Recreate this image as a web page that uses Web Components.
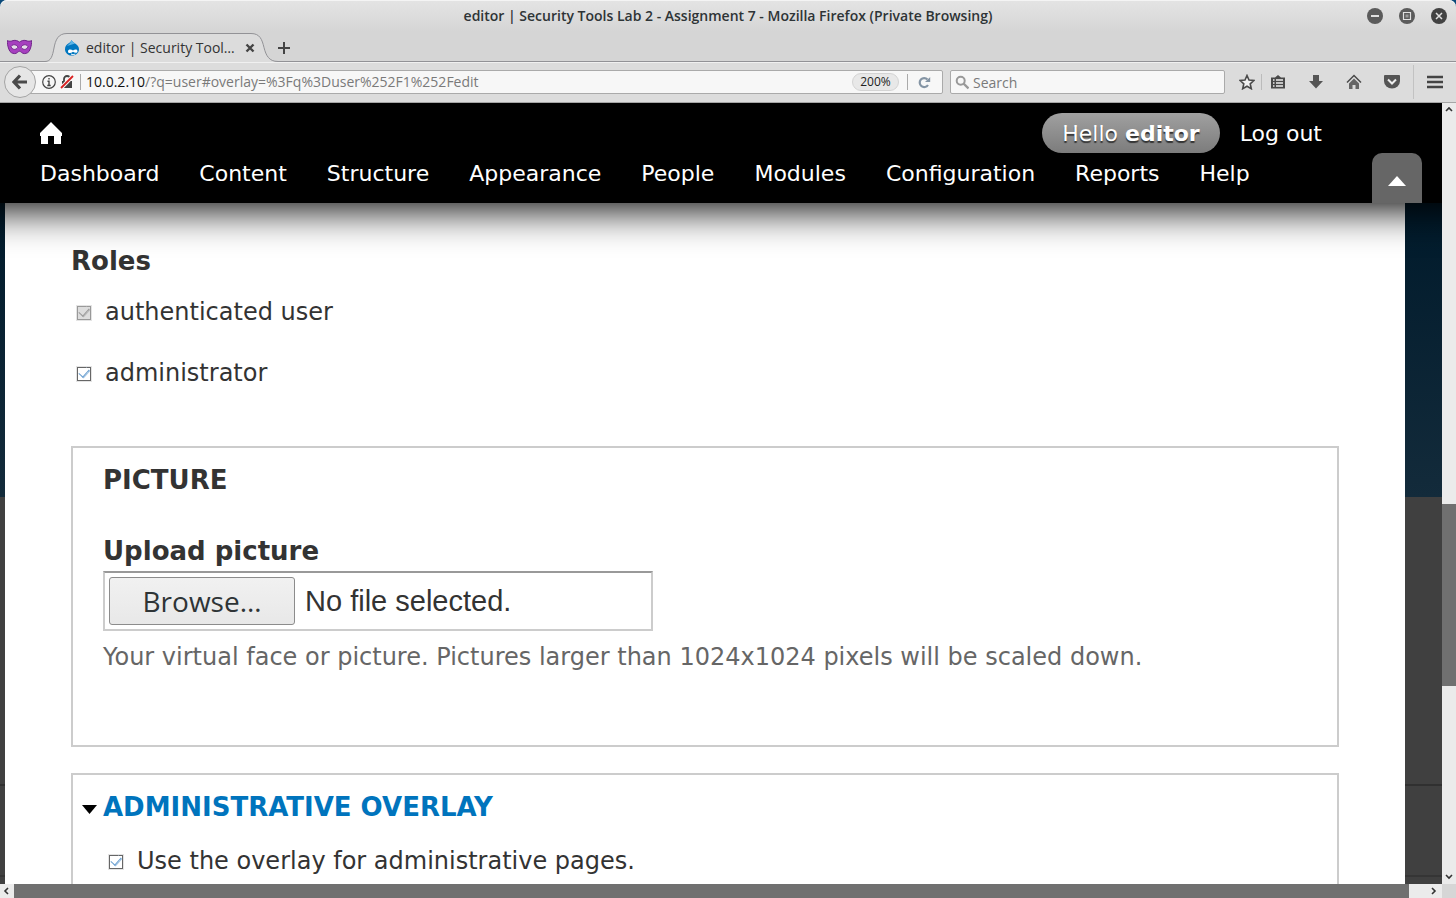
<!DOCTYPE html>
<html lang="en">
<head>
<meta charset="utf-8">
<title>editor | Security Tools Lab 2 - Assignment 7</title>
<style>
  html, body { height: 100%; margin: 0; }
  body { display: flex; flex-direction: column; overflow: hidden; background: #0b4a7a; }
</style>
</head>
<body>
<browser-window heading="editor | Security Tools Lab 2 - Assignment 7 - Mozilla Firefox (Private Browsing)">
  <tab-strip slot="tabs" label="editor | Security Tool…"></tab-strip>
  <nav-bar slot="nav"></nav-bar>
  <scroll-view>
    <admin-toolbar slot="toolbar"></admin-toolbar>
    <page-overlay>
      <role-list></role-list>
      <field-group heading="PICTURE">
        <file-field></file-field>
      </field-group>
      <field-group heading="ADMINISTRATIVE OVERLAY" collapsible>
        <check-item checked>Use the overlay for administrative pages.</check-item>
      </field-group>
    </page-overlay>
  </scroll-view>
</browser-window>

<script>
const define = (name, html, setup) => {
  const template = document.createElement('template');
  template.innerHTML = '<style>:host,*{box-sizing:border-box}button{font:inherit;color:inherit;border:0;padding:0;background:none;cursor:pointer}svg{display:block}</style>' + html;
  customElements.define(name, class extends HTMLElement {
    constructor() {
      super();
      this.attachShadow({ mode: 'open' }).append(template.content.cloneNode(true));
    }
    connectedCallback() { if (setup) setup(this, this.shadowRoot); }
  });
};

define('browser-window', `
<style>
  :host { display: flex; flex-direction: column; flex: 1; min-height: 0; font: 14px/20px "Open Sans", "Noto Sans", sans-serif; color: #2e3436;
    background: linear-gradient(#e4e4e4, #d5d5d5 32px); border-radius: 7px 7px 0 0; overflow: hidden; box-shadow: inset 0 1px #f4f4f4; }
  header { display: grid; grid-template-columns: 96px 1fr 96px; align-items: center; height: 32px; }
  h1 { grid-column: 2; margin: 0; font-size: 14px; line-height: 20px; font-weight: 600; text-align: center; white-space: nowrap; }
  .controls { display: flex; justify-content: flex-end; gap: 16px; padding-right: 9px; }
</style>
<header>
  <h1></h1>
  <div class="controls">
    <button aria-label="Minimize"><svg width="16" height="16"><circle cx="8" cy="8" r="8" fill="#5b5b5b"/><path d="M4 8h8" stroke="#e0e0e0" stroke-width="2"/></svg></button>
    <button aria-label="Maximize"><svg width="16" height="16"><circle cx="8" cy="8" r="8" fill="#5b5b5b"/><path d="M4.500 4.500h7v7h-7z" fill="none" stroke="#e0e0e0" stroke-width="1.200"/><path d="M6.500 6.500h3v3h-3z" fill="#999"/></svg></button>
    <button aria-label="Close"><svg width="16" height="16"><circle cx="8" cy="8" r="8" fill="#424242"/><path d="M5 5l6 6M11 5l-6 6" stroke="#e0e0e0" stroke-width="1.500"/></svg></button>
  </div>
</header>
<slot name="tabs"></slot>
<slot name="nav"></slot>
<slot></slot>`, (host, root) => { root.querySelector('h1').textContent = host.getAttribute('heading'); });

define('tab-strip', `
<style>
  :host { display: flex; align-items: center; height: 30px; border-bottom: 1px solid #929296; }
  .mask { margin: 0 13px 0 7px; }
  .tab { position: relative; display: flex; align-items: center; width: 233px; height: 30px; padding: 2px 23px 0 19px; }
  .shape { position: absolute; left: 0; top: 0; z-index: 0; }
  .tab > :not(.shape) { position: relative; }
  .title { flex: 1; margin-left: 6px; white-space: nowrap; color: #333; }
</style>
<svg class="mask" width="25" height="16" viewBox="0 0 25 16"><path d="M.5 1.500C2 2.600 4 2.400 6 1.600c2.600-.8 5 .4 6.500 1.500C14 2 16.400.8 19 1.600c2 .8 4 1 5.500-.1.300 3-.2 5.500-1.300 8.500-1 3.500-3.500 4.600-6 4.600-2.200 0-3.200-2.300-4.700-2.300s-2.500 2.300-4.700 2.300c-2.500 0-5-1.100-6-4.600C.7 7 .2 4.500.5 1.500z" fill="#a63fbf" stroke="#71278a"/><path d="M4 7.500c2-2.800 5.500-2 7 .7C9 11 5.600 11.500 4 7.500zM21 7.500c-2-2.800-5.500-2-7 .7C16 11 19.400 11.500 21 7.500z" fill="#e6dcea" stroke="#71278a"/></svg>
<div class="tab">
  <svg class="shape" width="233" height="30"><path d="M0 30v-.5C6 29.500 7.500 24 9 16S13 1.500 22 1.500H206c9 0 11 6 13 14s5 14 14 14v.5z" fill="#dcdcdc"/><path d="M0 29.500C6 29.500 7.500 24 9 16S13 1.500 22 1.500H206c9 0 11 6 13 14s5 14 14 14" fill="none" stroke="#929296"/></svg>
  <svg width="16" height="16" viewBox="0 0 16 16"><path d="M7.500 0c.8 1.600 2 2.300 3.700 3.400C13.500 5 15 6.600 15 9.300 15 13 12 15.600 8 15.600S1 12.800 1 9.200c0-2.500 1.400-4.300 3.300-5.600C6 2.500 7 1.500 7.500 0z" fill="#0077c0"/><path d="M7.500 0c.8 1.600 2 2.300 3.700 3.400l-5 1.600L3 6c2-2.500 4-3 4.500-6z" fill="#5cb4e6"/><path d="M4 11.500C4 9 7 9 9 10.500c2-1.500 4.500-1.500 4.500.7 0 2-2.500 2-4.500.6-2 1.600-5 1.800-5-.3z" fill="#fff"/><path d="M7 14c1.500.8 3 .7 4.200 0" stroke="#fff" fill="none"/></svg>
  <span class="title"></span>
  <button aria-label="Close tab"><svg width="10" height="10"><path d="M1.500 1.500l7 7M8.500 1.500l-7 7" stroke="#444" stroke-width="2.400"/></svg></button>
</div>
<button aria-label="New tab"><svg width="12" height="14"><path d="M6 2v12M0 8h12" stroke="#444" stroke-width="2"/></svg></button>`,
(host, root) => { root.querySelector('.title').textContent = host.getAttribute('label'); });

define('nav-bar', `
<style>
  :host { display: flex; align-items: center; height: 41px; padding: 0 13px 0 4px; background: #dcdcdc; border-bottom: 1px solid #a6a6a6; box-shadow: inset 0 1px #f0f0f0; }
  .back { position: relative; display: grid; place-items: center; width: 32px; height: 32px; margin-right: -16px; border: 1px solid #a4a4a4; border-radius: 50%; background: #e6e6e6; }
  .field { display: flex; align-items: center; height: 24px; border: 1px solid #aaa; border-radius: 2px; background: #f7f7f7; color: #7a7a7a; }
  .url { flex: 1; margin-right: 7px; padding: 0 11px 0 21px; }
  .search { width: 275px; padding-left: 4px; }
  .search svg { margin-right: 4px; }
  .bar { width: 1px; height: 16px; background: #aaa; }
  .address { position: relative; flex: 1; height: 22px; margin-left: 5px; }
  .address span { position: absolute; inset: 0; line-height: 22px; pointer-events: none; white-space: nowrap; }
  b { font-weight: 400; color: #111; }
  input { width: 100%; height: 22px; min-width: 0; padding: 0; border: 0; outline: 0; background: none; font: inherit; color: inherit; }
  input::placeholder { color: #7a7a7a; opacity: 1; }
  .zoom { width: 47px; height: 18px; margin-right: 8px; border: 1px solid #d4d4d4; border-radius: 9px; background: #e8e8e8; font-size: 12px; line-height: 16px; color: #222; text-align: center; }
  .tools { display: flex; align-items: center; padding-left: 14px; }
  .tools .long { height: 34px; margin: 0 13px 0 13px; background: #c2c2c2; }
</style>
<button class="back" aria-label="Back"><svg width="16" height="16"><path d="M8 1.500L2 8l6 6.500M2.500 8H15" fill="none" stroke="#4a4a4a" stroke-width="3.200"/></svg></button>
<div class="field url">
  <svg width="14" height="14" viewBox="0 0 14 14"><circle cx="7" cy="7" r="6.300" fill="none" stroke="#444" stroke-width="1.200"/><path d="M7 3v1.600M5.500 6.300H7v4M5.300 10.500h3.400" fill="none" stroke="#444" stroke-width="1.400"/></svg>
  <svg width="14" height="14" viewBox="0 0 14 14" style="margin:0 6px 0 4px"><path d="M2 6h10v7H2z" fill="#444"/><path d="M4 6V4a3 3 0 0 1 6 0v2" fill="none" stroke="#444" stroke-width="1.800"/><path d="M1 13L13 1" stroke="#f7f7f7" stroke-width="4"/><path d="M1 13L13 1" stroke="#d92121" stroke-width="1.800"/></svg>
  <div class="bar"></div>
  <div class="address"><input aria-label="Address"><span><b>10.0.2.10</b>/?q=user#overlay=%3Fq%3Duser%252F1%252Fedit</span></div>
  <button class="zoom">200%</button>
  <div class="bar"></div>
  <button aria-label="Reload" style="margin-left:10px"><svg width="13" height="13"><path d="M10 9a4.500 4.500 0 1 1-.5-5.500" fill="none" stroke="#8494a4" stroke-width="2.200"/><path d="M12.200 1v5H7z" fill="#8494a4"/></svg></button>
</div>
<label class="field search">
  <svg width="15" height="15"><circle cx="5.700" cy="5.700" r="4" fill="none" stroke="#999" stroke-width="2"/><path d="M8.500 8.500l5 5" stroke="#999" stroke-width="2.400"/></svg>
  <input placeholder="Search" aria-label="Search">
</label>
<div class="tools">
  <button aria-label="Bookmark"><svg width="16" height="16"><path d="M8 1.500l2 4.500 4.900.5-3.700 3.300 1.100 4.900L8 12.200l-4.300 2.500 1.100-4.900L1.100 6.500 6 6z" fill="#f0f0f0" stroke="#4a4a4a" stroke-width="1.600"/></svg></button>
  <div class="bar" style="margin:0 8px 0 6px;background:#bbb"></div>
  <button aria-label="Bookmarks list"><svg width="16" height="16"><path d="M1 3.500h4L8 1l3 2.500h4v11H1z" fill="#4a4a4a"/><path d="M3 6h1.500M3 9h1.500M3 12h1.500M6 6h7M6 9h7M6 12h7" stroke="#eee" stroke-width="1.600"/></svg></button>
  <button aria-label="Downloads" style="margin-left:22px"><svg width="16" height="16"><path d="M5 1h6v6h4l-7 7.500L1 7h4z" fill="#555"/></svg></button>
  <button aria-label="Home" style="margin:0 22px"><svg width="16" height="16"><path d="M3 9.500l5-5 5 5V15H9.500v-4h-3v4H3z" fill="#666"/><path d="M1 8.500l7-7 7 7" fill="none" stroke="#4a4a4a" stroke-width="1.500"/></svg></button>
  <button aria-label="Pocket"><svg width="16" height="16"><path d="M1 1h14q1 0 1 1v5a8 7.500 0 0 1-16 0V2q0-1 1-1z" fill="#555"/><path d="M4 5.500l4 4 4-4" fill="none" stroke="#eee" stroke-width="2"/></svg></button>
  <div class="bar long"></div>
  <button aria-label="Menu"><svg width="16" height="16"><path d="M0 3h16M0 8h16M0 13h16" stroke="#444" stroke-width="2.600"/></svg></button>
</div>`);

define('scroll-view', `
<style>
  :host { display: grid; grid-template: minmax(0, 1fr) 14px / minmax(0, 1fr) 14px; flex: 1; min-height: 0; background: #ebebeb; }
  .view { display: flex; flex-direction: column; overflow: hidden;
    background: linear-gradient(#303030, #303030) 0 681px / 100% 2px no-repeat, linear-gradient(#353535, #353535) 0 772px / 100% 2px no-repeat,
      linear-gradient(#001a2b 100px, #132b3b 394px, #404040 394px); }
  .bar { display: flex; justify-content: space-between; align-items: center; }
  .v { flex-direction: column; padding: 3px 0 4px; }
  .thumb { background: #707070; }
  .v .thumb { width: 14px; height: 182px; margin: auto 0 188px; }
  .h .thumb { flex: 1; height: 14px; margin: 0 22px 0 0; }
  .h button { width: 14px; padding-left: 3px; }
  .h button + .thumb + button { width: 11px; padding: 0; }
  .corner { background: #d6d6d6; }
</style>
<div class="view"><slot name="toolbar"></slot><slot></slot></div>
<div class="bar v">
  <button aria-label="Scroll up"><svg width="8" height="6"><path d="M1 5l3-3 3 3" fill="none" stroke="#333" stroke-width="1.600"/></svg></button>
  <div class="thumb"></div>
  <button aria-label="Scroll down"><svg width="8" height="6"><path d="M1 1l3 3 3-3" fill="none" stroke="#333" stroke-width="1.600"/></svg></button>
</div>
<div class="bar h">
  <button aria-label="Scroll left"><svg width="6" height="8"><path d="M5 1L2 4l3 3" fill="none" stroke="#333" stroke-width="1.600"/></svg></button>
  <div class="thumb"></div>
  <button aria-label="Scroll right"><svg width="6" height="8"><path d="M1 1l3 3-3 3" fill="none" stroke="#333" stroke-width="1.600"/></svg></button>
</div>
<div class="corner"></div>`);

define('admin-toolbar', `
<style>
  :host { display: block; position: relative; z-index: 1; flex: none; height: 100px; padding-top: 10px; color: #fff; font: 22px/42px "DejaVu Sans", sans-serif; }
  :host::before { content: ""; position: absolute; z-index: -1; inset: 0 -60px; background: #000; box-shadow: 0 6px 40px #000; }
  .row { display: flex; align-items: center; height: 40px; padding: 0 20px 0 40px; }
  .first { padding-right: 120px; }
  a { height: 40px; color: inherit; text-decoration: none; white-space: nowrap; }
  .home { display: grid; align-items: center; margin-right: auto; }
  .user { margin-right: 20px; padding: 0 20px; border-radius: 20px; background: linear-gradient(#a0a0a0, #7c7c7c); text-shadow: 0 2px 1px #333; }
  .second { height: 50px; align-items: flex-start; }
  nav { display: flex; gap: 40px; }
  .toggle { display: grid; place-items: center; width: 50px; height: 50px; margin-left: auto; padding-top: 5px; border-radius: 10px 10px 0 0; background: #666; }
</style>
<div class="row first">
  <a class="home" href="#" aria-label="Home"><svg width="22" height="22"><path d="M11 0l11 11v3h-1v8h-7v-8H8v8H1v-8H0v-3z" fill="#fff"/></svg></a>
  <a class="user" href="#">Hello <strong>editor</strong></a>
  <a href="#">Log out</a>
</div>
<div class="row second">
  <nav><a href="#">Dashboard</a><a href="#">Content</a><a href="#">Structure</a><a href="#">Appearance</a><a href="#">People</a><a href="#">Modules</a><a href="#">Configuration</a><a href="#">Reports</a><a href="#">Help</a></nav>
  <button class="toggle" aria-label="Hide shortcuts"><svg width="18" height="10"><path d="M9 0l9 10H0z" fill="#fff"/></svg></button>
</div>`);

define('page-overlay', `
<style>
  :host { display: flex; flex-direction: column; gap: 26px; flex: 1 0 auto; margin: 0 37px 0 5px; padding: 40px 66px 0; background: #fff; color: #333; font: 24px/36px "DejaVu Sans", sans-serif; }
</style><slot></slot>`);

define('role-list', `
<style>
  :host { display: block; height: 177px; }
  fieldset { margin: 0; padding: 0; border: 0; }
  legend { padding: 0; margin-bottom: 15px; font-size: 26px; font-weight: 700; }
  check-item + check-item { margin-top: 25px; }
</style>
<fieldset>
  <legend>Roles</legend>
  <check-item checked disabled>authenticated user</check-item>
  <check-item checked>administrator</check-item>
</fieldset>`);

define('check-item', `
<style>
  :host { display: block; }
  label { display: flex; align-items: center; gap: 14px; padding-left: 6px; }
  input { appearance: none; width: 14px; height: 14px; margin: 1px 0 0; border: 1px solid #666; background: #fff; display: grid; place-items: center; outline: 1px solid #e4e4e4; }
  input:checked::before { content: ""; width: 5px; height: 9px; margin-top: -3px; border: solid #6a9fd0; border-width: 0 1px 1px 0; box-shadow: 1px 0 #a9c9e6; transform: rotate(42deg); }
  input:disabled { border-color: #999; background: #ddd; }
  input:disabled::before { border-color: #999; box-shadow: 1px 0 #bbb; }
</style>
<label><input type="checkbox"><span><slot></slot></span></label>`, (host, root) => {
  const box = root.querySelector('input');
  box.checked = host.hasAttribute('checked');
  box.disabled = host.hasAttribute('disabled');
});

define('field-group', `
<style>
  :host { display: block; min-height: 301px; padding: 14px 30px; border: 2px solid #ccc; }
  h2 { display: flex; align-items: center; margin: 0; font-size: 26px; line-height: 36px; font-weight: 700; }
  h2 svg { display: none; }
  a { color: #0074bd; text-decoration: none; }
  :host([collapsible]) h2 { margin-left: -21px; }
  :host([collapsible]) h2 svg { display: block; margin: 4px 6px 0 0; }
  .body { padding-top: 18px; }
</style>
<h2><svg width="15" height="9"><path d="M0 0h15L7.500 9z" fill="#000"/></svg><span></span></h2>
<div class="body"><slot></slot></div>`, (host, root) => {
  const span = root.querySelector('span');
  if (host.hasAttribute('collapsible')) {
    const link = document.createElement('a');
    link.href = '#';
    link.textContent = host.getAttribute('heading');
    span.replaceChildren(link);
  } else span.textContent = host.getAttribute('heading');
});

define('file-field', `
<style>
  :host { display: block; padding-top: 17px; }
  label { display: block; font-size: 26px; font-weight: 700; }
  .control { display: flex; align-items: center; gap: 10px; width: 550px; max-width: 100%; height: 60px; margin: 2px 0 8px; padding: 0 4px; border: 2px solid #ccc; border-top-color: #999; font: 29px/40px "Liberation Sans", sans-serif; }
  button { width: 186px; height: 48px; border: 1px solid #8c8c8c; border-radius: 3px; background: linear-gradient(#f1f1f1, #e8e8e8); font: 28px/40px "Open Sans", "Noto Sans", sans-serif; color: #2e3436; }
  p { margin: 0; color: #666; }
</style>
<label for="pick">Upload picture</label>
<div class="control"><button id="pick">Browse…</button><output for="pick">No file selected.</output></div>
<input type="file" hidden>
<p>Your virtual face or picture. Pictures larger than 1024x1024 pixels will be scaled down.</p>`, (host, root) => {
  const file = root.querySelector('input');
  root.querySelector('button').onclick = () => file.click();
  file.onchange = () => { root.querySelector('output').textContent = file.files.length ? file.files[0].name : 'No file selected.'; };
});
</script>
</body>
</html>
